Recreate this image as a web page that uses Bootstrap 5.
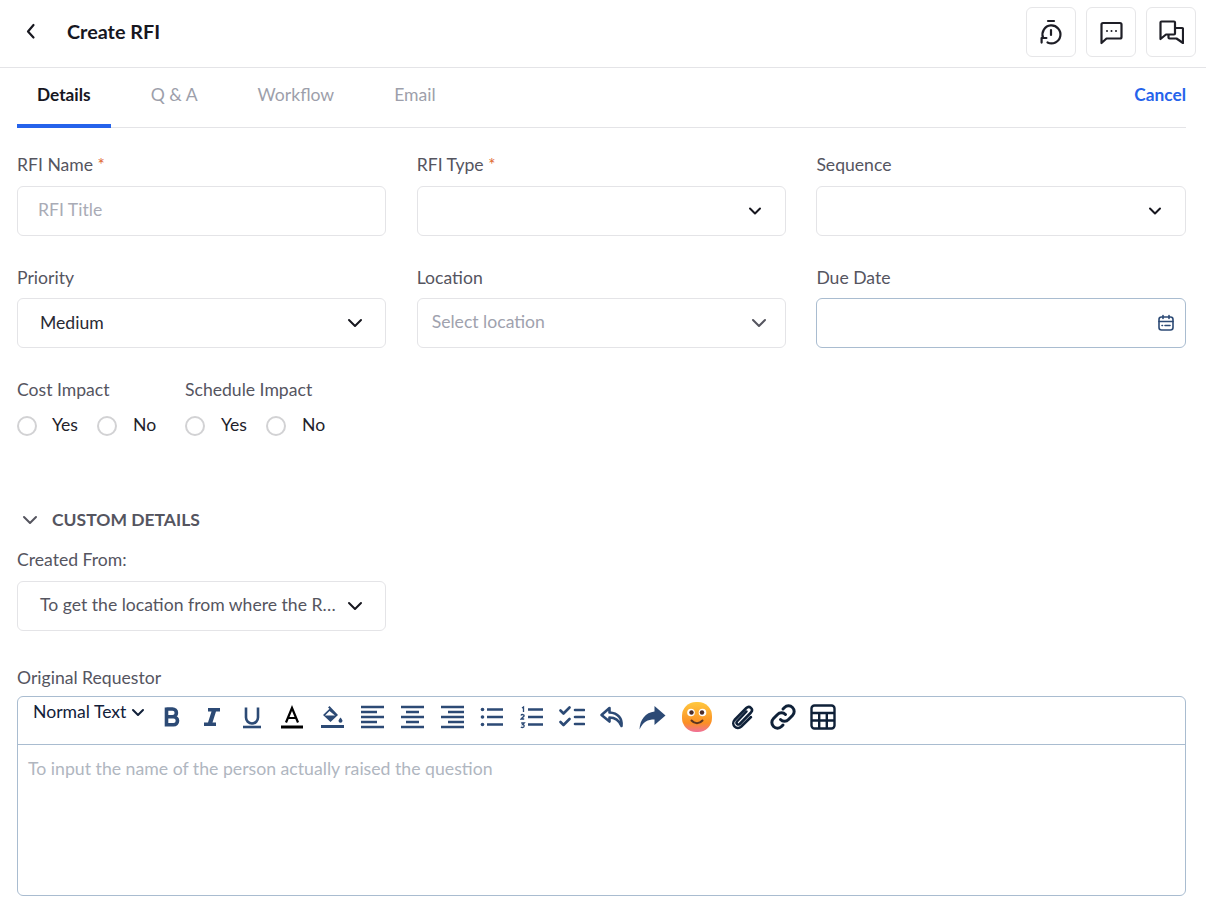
<!doctype html>
<html lang="en">
<head>
<meta charset="utf-8">
<title>Create RFI</title>
<link href="https://cdn.jsdelivr.net/npm/bootstrap@5.3.0/dist/css/bootstrap.min.css" rel="stylesheet">
<style>
body{font-family:"Lato","Liberation Sans",sans-serif;font-size:17.6px;color:#1c1c28;background:#fff;margin:0}
.top-bar{height:68px;border-bottom:1px solid #e4e4e7;padding:7px 10px 0 25px}
.page-title{font-size:19.8px;font-weight:700;color:#17171f;margin:0 0 0 30px;line-height:48px}
.back-btn{width:12px;height:48px;color:#17171f}
.act-row{column-gap:10px}
.act-btn{width:50px;height:50px;border:1px solid #e6e6e8;border-radius:6px;background:#fff;padding:0;color:#1e1e26}
.page-body{padding:0 20px 0 17px}
.tab-row{height:60px;border-bottom:1px solid #e4e4e7}
.tab-link{padding:0 20px;height:60px;line-height:54px;color:#9d9fab;font-size:17.6px;margin-right:20px;text-decoration:none;border-bottom:4px solid transparent;margin-bottom:-1px}
.tab-link.on{color:#17171f;font-weight:700;border-bottom-color:#2563eb;font-size:17.3px}
.cancel-link{color:#2563eb;font-weight:700;font-size:17.3px;line-height:54px;text-decoration:none}
.grid-3{display:grid;grid-template-columns:repeat(3,369.2px);column-gap:30.5px}
.fld-label{display:block;color:#55555f;font-size:17.6px;line-height:22px;height:22px;margin:0 0 10px}
.req{color:#e0662f;font-size:17px;line-height:0}
.fld-box{height:50px;border:1px solid #e4e4e7;border-radius:6px;background:#fff;color:#2a2a33;font-size:17.6px}
input.fld-box{font-size:17.6px;color:#2a2a33;padding:0 20px 3px;box-shadow:none}
input.fld-box::placeholder{color:#a9abb6}
.sel-box{padding:0 22px}
.sel-box.thin{padding:0 18px 0 14px}
.raise-txt{margin-bottom:2px}
.muted-txt{color:#a0a2ae}
.soft-txt{color:#55555f}
.date-box{border-color:#a9bcd0;padding:0 10px}
.row-a{margin-top:26px}
.row-b{margin-top:31px}
.row-b .fld-label{margin-bottom:9px}
.row-c{margin-top:31px}
.imp-col{width:168px}
.rad-row{height:22px;margin-top:14px;font-size:17.6px;color:#22222b}
.rad-row .form-check-input{width:20px;height:20px;margin:0 15px 0 0;border:2px solid #d2d2d4;flex:none}
.rad-row label{margin:0 19px 2px 0;line-height:22px}
.rad-row label.no-lbl{margin-left:1px}
.rad-row label.yes-wide{margin-left:1px}
.sect-head{margin-top:72px;height:22px;color:#55555f;font-weight:700;font-size:17.5px;padding-left:5px}
.sect-head svg{margin-right:14px}
.row-d{margin-top:18px}
.row-e{margin-top:36px}
.row-e .fld-label{margin-bottom:7px}
.editor{height:200px;border:1px solid #a9bcd0;border-radius:6px;background:#fff}
.tool-bar{height:48px;border-bottom:1px solid #a9bcd0;padding-left:15px}
.fmt-pick{width:119px;height:30px;font-size:17.6px;color:#12213a;line-height:30px}
.fmt-pick svg{margin-left:5px}
.tool-ico{width:40px;height:40px;color:#2c4a75;flex:none}
.tool-ico.wide{width:51px}
.tool-ico.wide svg{margin-right:2px}
.tool-ico.dark{color:#0f2138}
.tool-ico.black{color:#000}
.ed-area{padding:13px 10px;color:#b0b6bf;font-size:17.68px;line-height:22px}
</style>
</head>
<body>
<header class="top-bar d-flex justify-content-between align-items-start">
  <div class="d-flex align-items-center">
    <div class="back-btn d-flex align-items-center"><svg width="12" height="18" viewBox="0 0 12 18" fill="none" stroke="currentColor" stroke-width="2.2" stroke-linecap="round" stroke-linejoin="round"><path d="M8.500 3 3 9.500l5.500 6"/></svg></div>
    <h1 class="page-title">Create RFI</h1>
  </div>
  <div class="d-flex act-row">
    <button type="button" class="act-btn d-flex align-items-center justify-content-center" aria-label="History"><svg width="26" height="28" viewBox="0 0 26 28" fill="none" stroke="currentColor" stroke-width="2.2" stroke-linecap="round" stroke-linejoin="round"><path d="M10 3h6"/><path d="M13 12v5"/><path d="M5 19.500A9 9 0 1 1 9.500 24.500"/><path d="M3.600 24.600V20h4.800"/></svg></button>
    <button type="button" class="act-btn d-flex align-items-center justify-content-center" aria-label="Comments"><svg width="26" height="26" viewBox="0 0 26 26" fill="none" stroke="currentColor" stroke-width="2.2" stroke-linejoin="round"><path d="M5 4h17a1.500 1.500 0 0 1 1.500 1.500V18a1.500 1.500 0 0 1-1.500 1.500H8.500L3.500 24V5.500A1.500 1.500 0 0 1 5 4Z"/><circle cx="9" cy="12" r="1" fill="currentColor" stroke="none"/><circle cx="13.500" cy="12" r="1" fill="currentColor" stroke="none"/><circle cx="18" cy="12" r="1" fill="currentColor" stroke="none"/></svg></button>
    <button type="button" class="act-btn d-flex align-items-center justify-content-center" aria-label="Discussions"><svg width="26" height="26" viewBox="0 0 26 26" fill="none" stroke="currentColor" stroke-width="2.200" stroke-linejoin="round"><path d="M3.500 2.500h12.500a1 1 0 0 1 1 1v11a1 1 0 0 1-1 1H8l-5.500 4.500V3.500a1 1 0 0 1 1-1Z"/><path d="M17 9h7a1 1 0 0 1 1 1v14l-6.500-4.500h-7a1 1 0 0 1-1-1v-3.500"/></svg></button>
  </div>
</header>

<main class="page-body">
  <nav class="tab-row d-flex justify-content-between">
    <div class="d-flex">
      <a class="tab-link on" href="#">Details</a>
      <a class="tab-link" href="#">Q &amp; A</a>
      <a class="tab-link" href="#">Workflow</a>
      <a class="tab-link" href="#">Email</a>
    </div>
    <a class="cancel-link" href="#">Cancel</a>
  </nav>

  <div class="grid-3 row-a">
    <div>
      <label class="fld-label">RFI Name <span class="req">*</span></label>
      <input class="fld-box form-control" placeholder="RFI Title">
    </div>
    <div>
      <label class="fld-label">RFI Type <span class="req">*</span></label>
      <div class="fld-box sel-box d-flex align-items-center justify-content-end"><svg width="16" height="10" viewBox="0 0 16 10" fill="none" stroke="#17171f" stroke-width="2" stroke-linecap="round" stroke-linejoin="round"><path d="M3 2.500 8 7.500l5-5"/></svg></div>
    </div>
    <div>
      <label class="fld-label">Sequence</label>
      <div class="fld-box sel-box d-flex align-items-center justify-content-end"><svg width="16" height="10" viewBox="0 0 16 10" fill="none" stroke="#17171f" stroke-width="2" stroke-linecap="round" stroke-linejoin="round"><path d="M3 2.500 8 7.500l5-5"/></svg></div>
    </div>
  </div>

  <div class="grid-3 row-b">
    <div>
      <label class="fld-label">Priority</label>
      <div class="fld-box sel-box d-flex align-items-center justify-content-between"><span>Medium</span><svg width="16" height="10" viewBox="0 0 16 10" fill="none" stroke="#17171f" stroke-width="2" stroke-linecap="round" stroke-linejoin="round"><path d="M2 2 8 8l6-6"/></svg></div>
    </div>
    <div>
      <label class="fld-label">Location</label>
      <div class="fld-box sel-box thin d-flex align-items-center justify-content-between"><span class="muted-txt raise-txt">Select location</span><svg width="16" height="10" viewBox="0 0 16 10" fill="none" stroke="#55555f" stroke-width="2" stroke-linecap="round" stroke-linejoin="round"><path d="M2 2 8 8l6-6"/></svg></div>
    </div>
    <div>
      <label class="fld-label">Due Date</label>
      <div class="fld-box date-box d-flex align-items-center justify-content-end"><svg width="18" height="18" viewBox="0 0 18 18" fill="none" stroke="#2c4a75" stroke-width="1.600" stroke-linecap="round"><rect x="2" y="3" width="14" height="13" rx="2.500"/><path d="M2 7.500h14M6 1.500v3M12 1.500v3"/><path d="M5 11.500h.5M8 11.500h5"/></svg></div>
    </div>
  </div>

  <div class="d-flex row-c">
    <div class="imp-col">
      <div class="fld-label mb-0">Cost Impact</div>
      <div class="rad-row d-flex align-items-center">
        <input class="form-check-input" type="radio" name="cost" id="c1"><label for="c1">Yes</label>
        <input class="form-check-input" type="radio" name="cost" id="c2"><label class="no-lbl" for="c2">No</label>
      </div>
    </div>
    <div>
      <div class="fld-label mb-0">Schedule Impact</div>
      <div class="rad-row d-flex align-items-center">
        <input class="form-check-input" type="radio" name="sch" id="s1"><label class="yes-wide" for="s1">Yes</label>
        <input class="form-check-input" type="radio" name="sch" id="s2"><label class="no-lbl" for="s2">No</label>
      </div>
    </div>
  </div>

  <div class="sect-head d-flex align-items-center">
    <svg width="16" height="10" viewBox="0 0 16 10" fill="none" stroke="#55555f" stroke-width="2" stroke-linecap="round" stroke-linejoin="round"><path d="M2 2 8 8l6-6"/></svg>
    <span>CUSTOM DETAILS</span>
  </div>

  <div class="grid-3 row-d">
    <div>
      <label class="fld-label">Created From:</label>
      <div class="fld-box sel-box d-flex align-items-center justify-content-between"><span class="soft-txt raise-txt text-nowrap">To get the location from where the R…</span><svg class="flex-shrink-0" width="16" height="10" viewBox="0 0 16 10" fill="none" stroke="#17171f" stroke-width="2" stroke-linecap="round" stroke-linejoin="round"><path d="M2 2 8 8l6-6"/></svg></div>
    </div>
  </div>

  <div class="row-e">
    <label class="fld-label">Original Requestor</label>
    <div class="editor">
      <div class="tool-bar d-flex align-items-start">
        <div class="fmt-pick d-flex align-items-center"><span>Normal Text</span><svg width="14" height="9" viewBox="0 0 14 9" fill="none" stroke="#12213a" stroke-width="2" stroke-linecap="round" stroke-linejoin="round"><path d="M2 2l5 5 5-5"/></svg></div>
        <div class="tool-ico d-flex align-items-center justify-content-center"><svg width="24" height="24" viewBox="0 0 24 24" fill="none" stroke="currentColor" stroke-width="3.600"><path d="M6.500 2.500v19M6.500 4h6a3.800 3.800 0 0 1 0 7.800h-6m0 0h7a4 4 0 0 1 0 8h-7"/></svg></div>
        <div class="tool-ico d-flex align-items-center justify-content-center"><svg width="24" height="24" viewBox="0 0 24 24" fill="currentColor"><path d="M8 3h12v3.500h-4l-3.500 11H16V21H4v-3.500h4l3.500-11H8Z"/></svg></div>
        <div class="tool-ico d-flex align-items-center justify-content-center"><svg width="24" height="24" viewBox="0 0 24 24" fill="none" stroke="currentColor" stroke-width="2.600"><path d="M6 2.500v10a6 6 0 0 0 12 0v-10"/><path d="M3 22h18"/></svg></div>
        <div class="tool-ico black d-flex align-items-center justify-content-center"><svg width="24" height="24" viewBox="0 0 24 24" fill="none" stroke="currentColor" stroke-width="2.200"><path d="M6 17.500 12 3l6 14.500M8 13h8"/><path d="M1 22h22" stroke-width="3"/></svg></div>
        <div class="tool-ico d-flex align-items-center justify-content-center"><svg width="24" height="24" viewBox="0 0 24 24" fill="currentColor"><path d="M9.500 1 8 2.500l1.500 1.300L3 10l7.500 7 7.500-7Zm0 5 5.500 4.500H5Z"/><path d="M20.500 12.500c1.200 1.500 2 2.500 2 3.300a2 2 0 0 1-4 0c0-.8.800-1.800 2-3.300Z"/><rect x="1" y="20" width="23" height="3"/></svg></div>
        <div class="tool-ico d-flex align-items-center justify-content-center"><svg width="24" height="24" viewBox="0 0 24 24" fill="none" stroke="currentColor" stroke-width="2.500"><path d="M1 2h23M1 7h16M1 12h23M1 17h16M1 22h23"/></svg></div>
        <div class="tool-ico d-flex align-items-center justify-content-center"><svg width="24" height="24" viewBox="0 0 24 24" fill="none" stroke="currentColor" stroke-width="2.500"><path d="M1 2h23M6 7h13M1 12h23M6 17h13M1 22h23"/></svg></div>
        <div class="tool-ico d-flex align-items-center justify-content-center"><svg width="24" height="24" viewBox="0 0 24 24" fill="none" stroke="currentColor" stroke-width="2.500"><path d="M1 2h23M8 7h16M1 12h23M8 17h16M1 22h23"/></svg></div>
        <div class="tool-ico d-flex align-items-center justify-content-center"><svg width="24" height="24" viewBox="0 0 24 24" fill="none" stroke="currentColor" stroke-width="2.600"><path d="M7 4.500h16M7 12h16M7 19.500h16"/><circle cx="2.500" cy="4.500" r="1.800" fill="currentColor" stroke="none"/><circle cx="2.500" cy="12" r="1.800" fill="currentColor" stroke="none"/><circle cx="2.500" cy="19.500" r="1.800" fill="currentColor" stroke="none"/></svg></div>
        <div class="tool-ico d-flex align-items-center justify-content-center"><svg width="24" height="24" viewBox="0 0 24 24" fill="none" stroke="currentColor" stroke-width="2.600"><path d="M8 4.500h15M8 12h15M8 19.500h15"/><path stroke-width="1.300" d="M2 3l1.500-1v5M1 10.500c.5-1.500 3.500-1.200 3 .5-.2.800-2 1.500-3 3h3.200M1.200 18h3l-1.500 1.500c2 0 2 3-.2 3-.7 0-1.200-.2-1.500-.7"/></svg></div>
        <div class="tool-ico d-flex align-items-center justify-content-center"><svg width="26" height="24" viewBox="0 0 26 24" fill="none" stroke="currentColor" stroke-width="2.600" stroke-linecap="round" stroke-linejoin="round"><path d="M16 5h9M16 12h9M16 19h9"/><path d="M1.500 5.500l3 3 6-6M1.500 17l3 3 6-6"/></svg></div>
        <div class="tool-ico d-flex align-items-center justify-content-center"><svg width="26" height="24" viewBox="0 0 26 24" fill="none" stroke="currentColor" stroke-width="2.600" stroke-linejoin="round" stroke-linecap="round"><path d="M10.500 3 2.500 10l8 6.500v-4c5 0 9 1.500 12 8.500 1-7.500-3.500-13-12-13.500Z"/></svg></div>
        <div class="tool-ico d-flex align-items-center justify-content-center"><svg width="28" height="26" viewBox="0 0 28 26" fill="currentColor"><path d="M16.500 2 27.500 11.500 16.500 21v-5.500c-7 0-11 2-15 10 .5-10 6-17 15-18Z"/></svg></div>
        <div class="tool-ico wide d-flex align-items-center justify-content-center"><svg width="32" height="32" viewBox="0 0 32 32"><defs><linearGradient id="emo" x1="0" y1="0" x2="0" y2="1"><stop offset="0" stop-color="#ffc83f"/><stop offset=".7" stop-color="#fb8f24"/><stop offset="1" stop-color="#f0709a"/></linearGradient></defs><rect x="1" y="1" width="30" height="30" rx="14" fill="url(#emo)"/><circle cx="10" cy="11.500" r="3.800" fill="#fff"/><circle cx="21.500" cy="11.500" r="3.800" fill="#fff"/><circle cx="10.500" cy="11.500" r="2.200" fill="#4a2c2a"/><circle cx="21" cy="11.500" r="2.200" fill="#4a2c2a"/><path d="M10.500 19.500c3 3.500 8 3.500 11 0" fill="none" stroke="#5c3520" stroke-width="2" stroke-linecap="round"/></svg></div>
        <div class="tool-ico dark d-flex align-items-center justify-content-center"><svg width="26" height="26" viewBox="0 0 26 26" fill="none" stroke="currentColor" stroke-width="2.500" stroke-linecap="round" stroke-linejoin="round"><path d="M16.500 7.500 7 17.500c-1.500 1.800 1 4 2.700 2.500L21 8.500c3-3.200-1.500-7.500-4.700-4.500L4.500 16c-4 4.500 2.200 10.800 6.800 6.500L21 13"/></svg></div>
        <div class="tool-ico dark d-flex align-items-center justify-content-center"><svg width="28" height="28" viewBox="0 0 28 28" fill="none" stroke="currentColor" stroke-width="3" stroke-linecap="round"><path d="M11.500 16.500a5.500 5.500 0 0 0 8 0l4-4a5.600 5.600 0 0 0-8-8l-1.500 1.500"/><path d="M16.500 11.500a5.500 5.500 0 0 0-8 0l-4 4a5.600 5.600 0 0 0 8 8l1.500-1.500"/></svg></div>
        <div class="tool-ico dark d-flex align-items-center justify-content-center"><svg width="26" height="26" viewBox="0 0 26 26" fill="none" stroke="currentColor" stroke-width="2.400"><rect x="1.500" y="1.500" width="23" height="23" rx="3"/><path d="M1.500 9h23M1.500 16.500h23M9.200 9v15.500M16.800 9v15.500"/></svg></div>
      </div>
      <div class="ed-area">To input the name of the person actually raised the question</div>
    </div>
  </div>
</main>
<script src="https://cdn.jsdelivr.net/npm/bootstrap@5.3.0/dist/js/bootstrap.bundle.min.js"></script>
</body>
</html>
